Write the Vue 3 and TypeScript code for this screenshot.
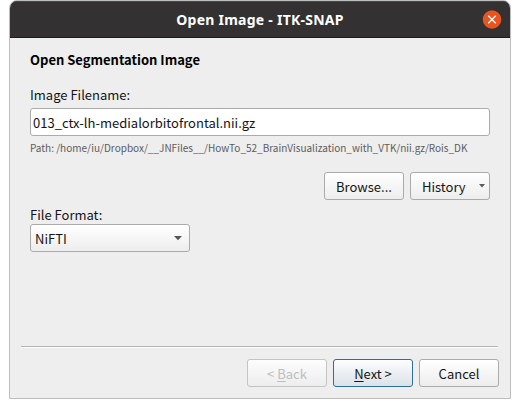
<script setup lang="ts">
import { ref } from 'vue'

const filename = ref('013_ctx-lh-medialorbitofrontal.nii.gz')
const path = '/home/iu/Dropbox/__JNFiles__/HowTo_52_BrainVisualization_with_VTK/nii.gz/Rois_DK'
const format = ref('NiFTI')
</script>

<template>
  <main class="window">
    <header class="titlebar">
      <span class="title">Open Image - ITK-SNAP</span>
      <svg class="close" viewBox="0 0 20 20" role="button" aria-label="Close">
        <circle cx="10" cy="9.5" r="9.3" fill="#e95420" />
        <path d="M6.3 5.8 13.7 13.2M13.7 5.8 6.3 13.2" stroke="#fff" stroke-width="1.3" />
      </svg>
    </header>
    <section class="content">
      <h1 class="heading"><span>Open Segmentation Image</span></h1>
      <label class="label name-label" for="filename">Image Filename:</label>
      <input id="filename" v-model="filename" class="field" spellcheck="false" />
      <p class="path">Path: {{ path }}</p>
      <div class="actions">
        <button class="button">Browse...</button>
        <button class="button history">
          <span>History</span>
          <svg class="small-arrow" viewBox="0 0 6 4"><path d="M0 0H6L3 3.5Z" fill="#5b5b5b" /></svg>
        </button>
      </div>
      <div class="label format-label">File Format:</div>
      <button class="button combo">
        <span>{{ format }}</span>
        <svg class="arrow" viewBox="0 0 8 5"><path d="M0 0H8L4 4.3Z" fill="#555" /></svg>
      </button>
    </section>
    <footer class="footer">
      <button class="button" disabled><span>&lt; <span class="key">B</span>ack</span></button>
      <button class="button primary"><span><span class="key">N</span>ext &gt;</span></button>
      <button class="button">Cancel</button>
    </footer>
  </main>
</template>

<style>
body {
  background: #fff;
}
</style>

<style scoped>
.window {
  box-sizing: border-box;
  display: flex;
  flex-direction: column;
  width: 502px;
  height: 399px;
  margin-left: 9px;
  overflow: hidden;
  border: 1px solid #bdbdbd;
  border-radius: 8px 8px 0 0;
  background: #eee;
  color: #141414;
  font: 13px/20px "Noto Sans CJK SC", sans-serif;
}
.titlebar {
  box-sizing: border-box;
  display: grid;
  grid-template-columns: 28px 1fr 28px;
  align-items: center;
  height: 37px;
  border-bottom: 1px solid #1e1c1d;
  border-top: 1px solid #474646;
  background: #333132;
}
.title {
  grid-column: 2;
  color: #fff;
  font: bold 14px/20px "Noto Sans", sans-serif;
  letter-spacing: 0.25px;
  text-align: center;
  white-space: nowrap;
}
.close {
  width: 20px;
  height: 20px;
}
.content {
  display: flex;
  flex-direction: column;
  height: 309px;
  box-sizing: border-box;
  margin: 0 12px 0 11px;
  padding: 12px 8px 0 9px;
  border-bottom: 1px solid #b5b5b5;
  box-shadow: 0 1px #fff;
}
.heading {
  margin: 0;
  color: #000;
  font-size: 13px;
  font-weight: bold;
  line-height: 20px;
}
.label {
  height: 20px;
}
.name-label {
  margin-top: 15px;
}
.field {
  box-sizing: border-box;
  width: 460px;
  height: 28px;
  margin: 3px 0 0;
  padding: 0 2px;
  border: 1px solid #ababab;
  border-radius: 3px;
  outline: none;
  background: #fff;
  color: #141414;
  font: inherit;
}
.path {
  height: 16px;
  margin: 4px 0 0;
  color: #5c5c5c;
  font-size: 10px;
  line-height: 16px;
  white-space: nowrap;
}
.actions {
  display: flex;
  justify-content: flex-end;
  gap: 6px;
  margin-top: 16px;
}
.button {
  box-sizing: border-box;
  display: flex;
  align-items: center;
  justify-content: center;
  width: 80px;
  height: 28px;
  padding: 2px 0 0;
  border: 1px solid #ababab;
  border-radius: 3px;
  background: linear-gradient(#fff, #ededed);
  color: #141414;
  font: inherit;
  white-space: nowrap;
}
.history {
  justify-content: space-between;
  padding: 2px 4px 0 11px;
}
.small-arrow {
  width: 6px;
  height: 4px;
  margin-bottom: 2px;
}
.format-label {
  margin-top: 5px;
  height: 19px;
}
.combo {
  justify-content: space-between;
  width: 160px;
  padding: 2px 7px 0 4px;
}
.arrow {
  width: 8px;
  height: 5px;
  margin-bottom: 2px;
}
.footer {
  display: flex;
  justify-content: flex-end;
  gap: 6px;
  padding: 12px 11px 0;
}
.button:disabled {
  border-color: #c4c4c4;
  background: linear-gradient(#fdfdfd, #ededed);
  color: #bebebe;
}
.primary {
  border-color: #2d6f99;
  background: linear-gradient(#fdfdfd, #dae2e9);
}
.key {
  text-decoration: underline;
  text-decoration-thickness: 1px;
  text-underline-offset: 2px;
}
</style>
